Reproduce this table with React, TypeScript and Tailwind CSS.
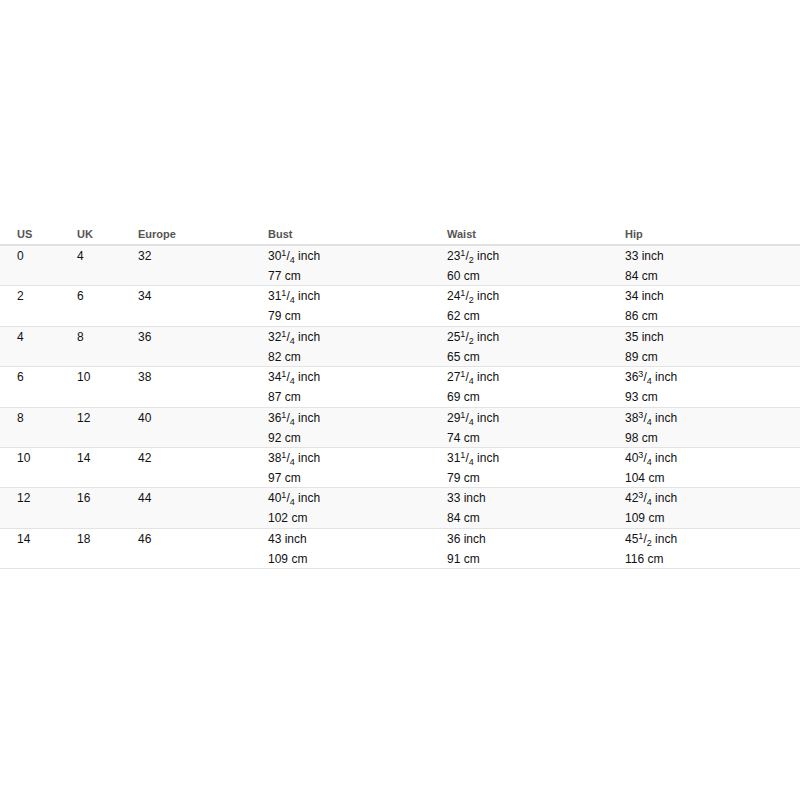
import React from "react";

type Meas = { whole: string; num?: string; den?: string; unit: string };

const m = (s: string): Meas => {
  const parts = s.split(" ");
  if (parts.length === 3) {
    const [n, d] = parts[1].split("/");
    return { whole: parts[0], num: n, den: d, unit: parts[2] };
  }
  return { whole: parts[0], unit: parts[1] };
};

const rows = [
  ["0", "4", "32", "30 1/4 inch", "77 cm", "23 1/2 inch", "60 cm", "33 inch", "84 cm"],
  ["2", "6", "34", "31 1/4 inch", "79 cm", "24 1/2 inch", "62 cm", "34 inch", "86 cm"],
  ["4", "8", "36", "32 1/4 inch", "82 cm", "25 1/2 inch", "65 cm", "35 inch", "89 cm"],
  ["6", "10", "38", "34 1/4 inch", "87 cm", "27 1/4 inch", "69 cm", "36 3/4 inch", "93 cm"],
  ["8", "12", "40", "36 1/4 inch", "92 cm", "29 1/4 inch", "74 cm", "38 3/4 inch", "98 cm"],
  ["10", "14", "42", "38 1/4 inch", "97 cm", "31 1/4 inch", "79 cm", "40 3/4 inch", "104 cm"],
  ["12", "16", "44", "40 1/4 inch", "102 cm", "33 inch", "84 cm", "42 3/4 inch", "109 cm"],
  ["14", "18", "46", "43 inch", "109 cm", "36 inch", "91 cm", "45 1/2 inch", "116 cm"],
];

function Value({ s }: { s: string }) {
  const v = m(s);
  return (
    <div className="h-[20px] leading-[20px] whitespace-nowrap">
      {v.whole}
      {v.num && (
        <>
          <span className="relative top-[-4px] text-[9px]">{v.num}</span>
          <span>/</span>
          <span className="relative top-[3px] text-[9px]">{v.den}</span>
        </>
      )}{" "}
      {v.unit}
    </div>
  );
}

export default function App() {
  return (
    <div
      className="w-[800px] h-[800px] bg-white pt-[224px] text-[#111]"
      style={{ fontFamily: '"Liberation Sans", Arial, sans-serif' }}
    >
      <div className="flex pl-[17px] h-[20px] leading-[21px] text-[11px] font-bold text-[#555] border-b-2 border-[#e0e0e0] box-content">
        <div className="w-[60px]">US</div>
        <div className="w-[61px]">UK</div>
        <div className="w-[130px]">Europe</div>
        <div className="w-[179px]">Bust</div>
        <div className="w-[178px]">Waist</div>
        <div className="flex-1">Hip</div>
      </div>
      {rows.map((r, i) => (
        <div
          key={i}
          className={`flex pl-[17px] h-[40.4px] border-b border-[#e3e3e3] text-[12px] ${
            i % 2 === 0 ? "bg-[#f9f9f9]" : "bg-white"
          }`}
        >
          <div className="w-[60px] leading-[20px]">{r[0]}</div>
          <div className="w-[61px] leading-[20px]">{r[1]}</div>
          <div className="w-[130px] leading-[20px]">{r[2]}</div>
          <div className="w-[179px]">
            <Value s={r[3]} />
            <Value s={r[4]} />
          </div>
          <div className="w-[178px]">
            <Value s={r[5]} />
            <Value s={r[6]} />
          </div>
          <div className="flex-1">
            <Value s={r[7]} />
            <Value s={r[8]} />
          </div>
        </div>
      ))}
    </div>
  );
}
